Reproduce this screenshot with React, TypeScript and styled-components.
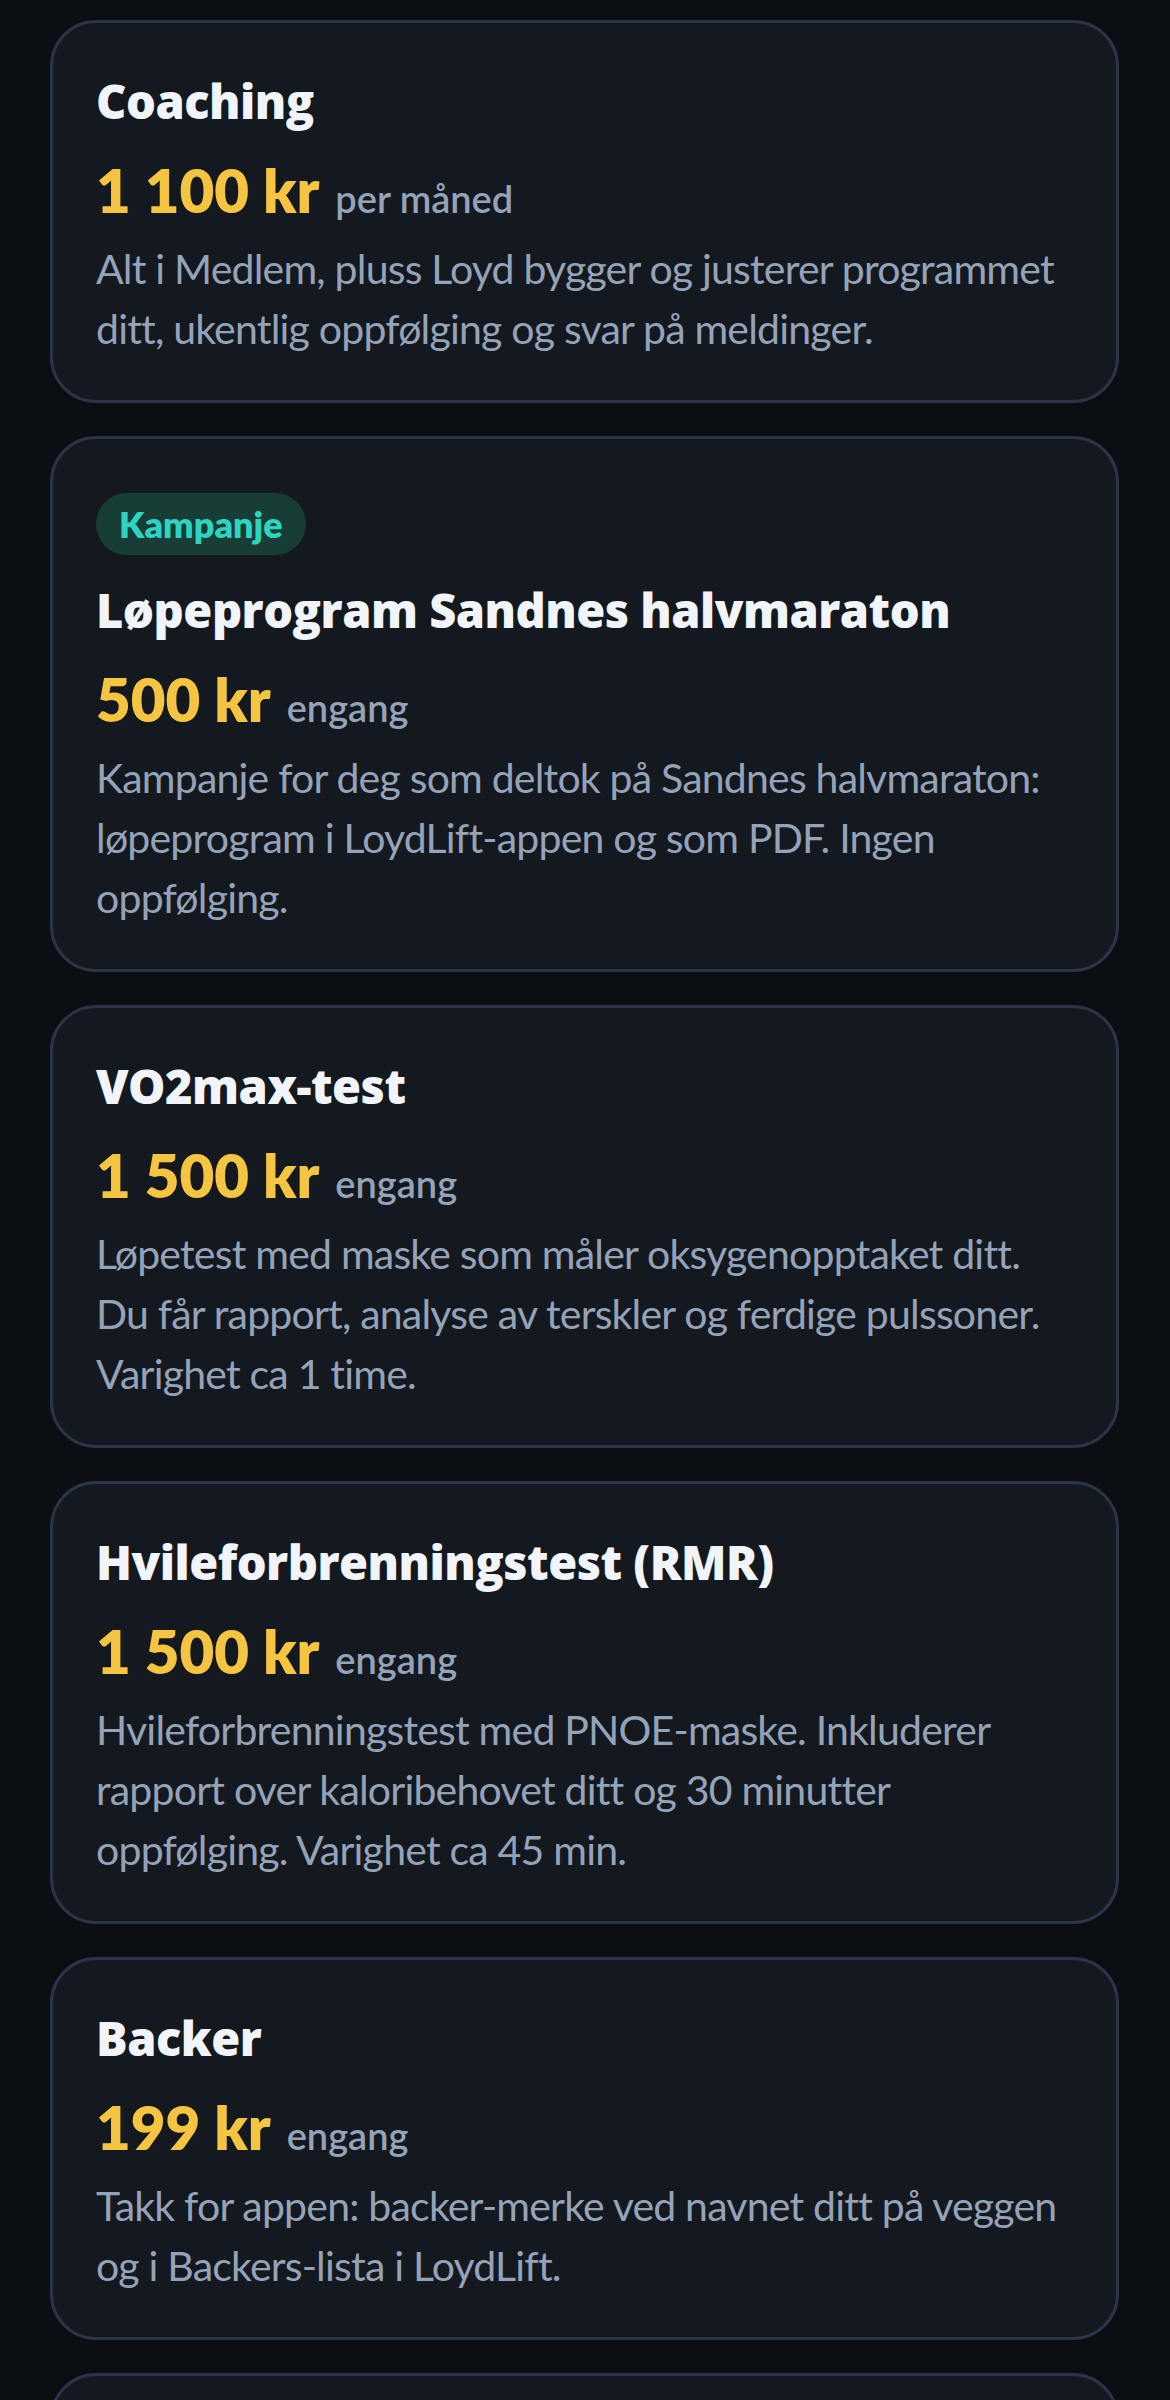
import React from 'react';
import styled, { createGlobalStyle } from 'styled-components';

type Plan = {
  title: string;
  price: string;
  unit: string;
  text: string;
  badge?: string;
};

const plans: Plan[] = [
  {
    title: 'Coaching',
    price: '1 100 kr',
    unit: 'per måned',
    text: 'Alt i Medlem, pluss Loyd bygger og justerer programmet ditt, ukentlig oppfølging og svar på meldinger.',
  },
  {
    badge: 'Kampanje',
    title: 'Løpeprogram Sandnes halvmaraton',
    price: '500 kr',
    unit: 'engang',
    text: 'Kampanje for deg som deltok på Sandnes halvmaraton: løpeprogram i LoydLift-appen og som PDF. Ingen oppfølging.',
  },
  {
    title: 'VO2max-test',
    price: '1 500 kr',
    unit: 'engang',
    text: 'Løpetest med maske som måler oksygenopptaket ditt. Du får rapport, analyse av terskler og ferdige pulssoner. Varighet ca 1 time.',
  },
  {
    title: 'Hvileforbrenningstest (RMR)',
    price: '1 500 kr',
    unit: 'engang',
    text: 'Hvileforbrenningstest med PNOE-maske. Inkluderer rapport over kaloribehovet ditt og 30 minutter oppfølging. Varighet ca 45 min.',
  },
  {
    title: 'Backer',
    price: '199 kr',
    unit: 'engang',
    text: 'Takk for appen: backer-merke ved navnet ditt på veggen og i Backers-lista i LoydLift.',
  },
  {
    title: 'Medlem',
    price: '400 kr',
    unit: 'per måned',
    text: 'Tilgang til treningsprogrammene i LoydLift-appen.',
  },
];

const GlobalStyle = createGlobalStyle`
  html, body {
    margin: 0;
    padding: 0;
    background: #0b0e13;
  }
  body {
    font-family: Lato, "Open Sans", sans-serif;
    -webkit-font-smoothing: antialiased;
  }
`;

const Page = styled.main`
  display: flex;
  flex-direction: column;
  gap: 33px;
  padding: 20px 51px 0 50px;
  height: 2400px;
  overflow: hidden;
  box-sizing: border-box;
`;

const Card = styled.section`
  display: flex;
  flex-direction: column;
  align-items: flex-start;
  flex-shrink: 0;
  background: #141920;
  border: 3px solid #2a3547;
  border-radius: 46px;
  padding: 47px 43px 41px;
`;

const Badge = styled.span`
  display: inline-block;
  margin: 7px 0 24px;
  padding: 9px 23px;
  border-radius: 999px;
  background: #173d36;
  color: #2dd4bf;
  font-size: 36px;
  line-height: 44px;
  font-weight: 800;
`;

const Title = styled.h2`
  margin: 0;
  color: #f1f5f9;
  font-family: "Open Sans", Lato, sans-serif;
  font-size: 47px;
  line-height: 62px;
  font-weight: 800;
  letter-spacing: -0.5px;
`;

const PriceRow = styled.div`
  display: flex;
  align-items: baseline;
  gap: 16px;
  margin-top: 22px;
`;

const Price = styled.span`
  color: #f5c542;
  font-size: 60px;
  line-height: 72px;
  font-weight: 800;
`;

const Unit = styled.span`
  color: #94a3b8;
  font-size: 38px;
  font-weight: 600;
`;

const Text = styled.p`
  margin: 13px 0 0;
  color: #94a3b8;
  font-size: 41px;
  line-height: 60px;
  font-weight: 400;
  letter-spacing: -0.8px;
`;

const PlanCard = ({ plan }: { plan: Plan }) => (
  <Card>
    {plan.badge && <Badge>{plan.badge}</Badge>}
    <Title>{plan.title}</Title>
    <PriceRow>
      <Price>{plan.price}</Price>
      <Unit>{plan.unit}</Unit>
    </PriceRow>
    <Text>{plan.text}</Text>
  </Card>
);

export default function App() {
  return (
    <>
      <GlobalStyle />
      <Page>
        {plans.map((p) => (
          <PlanCard key={p.title} plan={p} />
        ))}
      </Page>
    </>
  );
}
